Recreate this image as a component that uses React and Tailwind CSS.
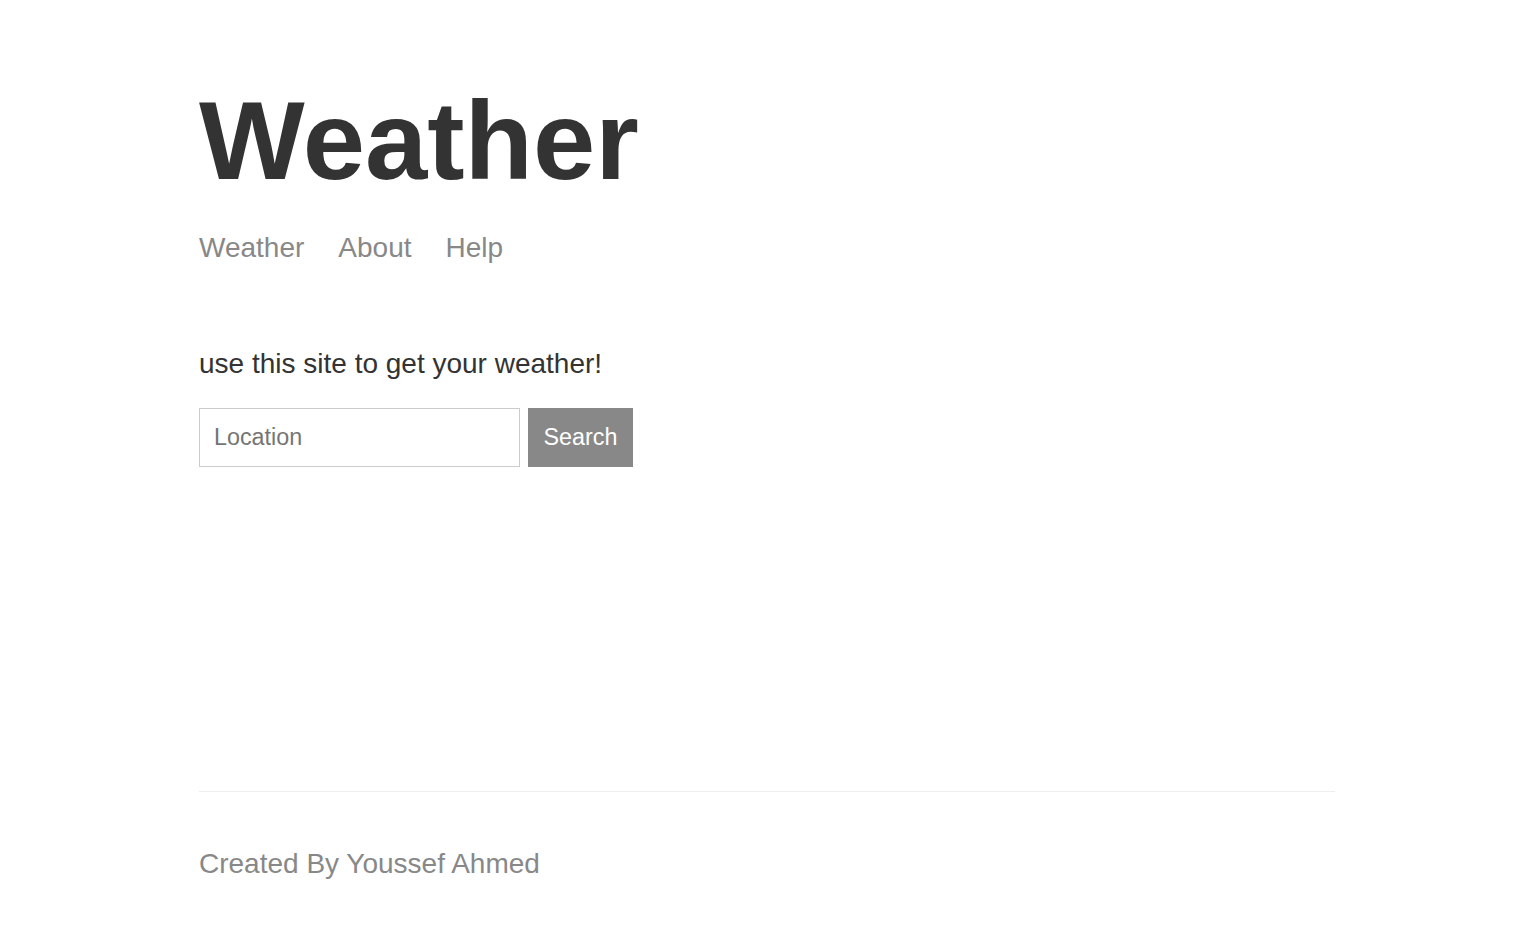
import React, { useState } from 'react';

export default function App() {
  const [location, setLocation] = useState('');

  const handleSubmit = (e) => {
    e.preventDefault();
  };

  return (
    <div
      className="h-screen flex flex-col max-w-[1192px] mx-auto px-[28px] text-[#333]"
      style={{ fontFamily: '"Liberation Sans", Arial, sans-serif' }}
    >
      <header className="pt-[77px] pb-[84px]">
        <h1 className="text-[112px] font-bold leading-[1.15] mb-[26px]">Weather</h1>
        <nav className="flex gap-[34px] text-[28px] leading-[1.15] text-[#888]">
          <a href="#">Weather</a>
          <a href="#">About</a>
          <a href="#">Help</a>
        </nav>
      </header>

      <div className="flex-grow">
        <p className="text-[28px] leading-[1.15]">use this site to get your weather!</p>
        <form onSubmit={handleSubmit} className="flex gap-[8px] mt-[28px]">
          <input
            type="text"
            placeholder="Location"
            value={location}
            onChange={(e) => setLocation(e.target.value)}
            className="w-[321px] h-[59px] border border-[#ccc] px-[14px] text-[23.33px] outline-none placeholder:text-[#757575]"
          />
          <button
            type="submit"
            className="w-[105px] h-[59px] bg-[#888] border border-[#888] text-white text-[23.33px] cursor-pointer"
          >
            Search
          </button>
        </form>
      </div>

      <footer className="mt-[28px] pt-[56px] pb-[56px] border-t border-[#eee] text-[#888]">
        <p className="text-[28px] leading-[1.15]">Created By Youssef Ahmed</p>
      </footer>
    </div>
  );
}
